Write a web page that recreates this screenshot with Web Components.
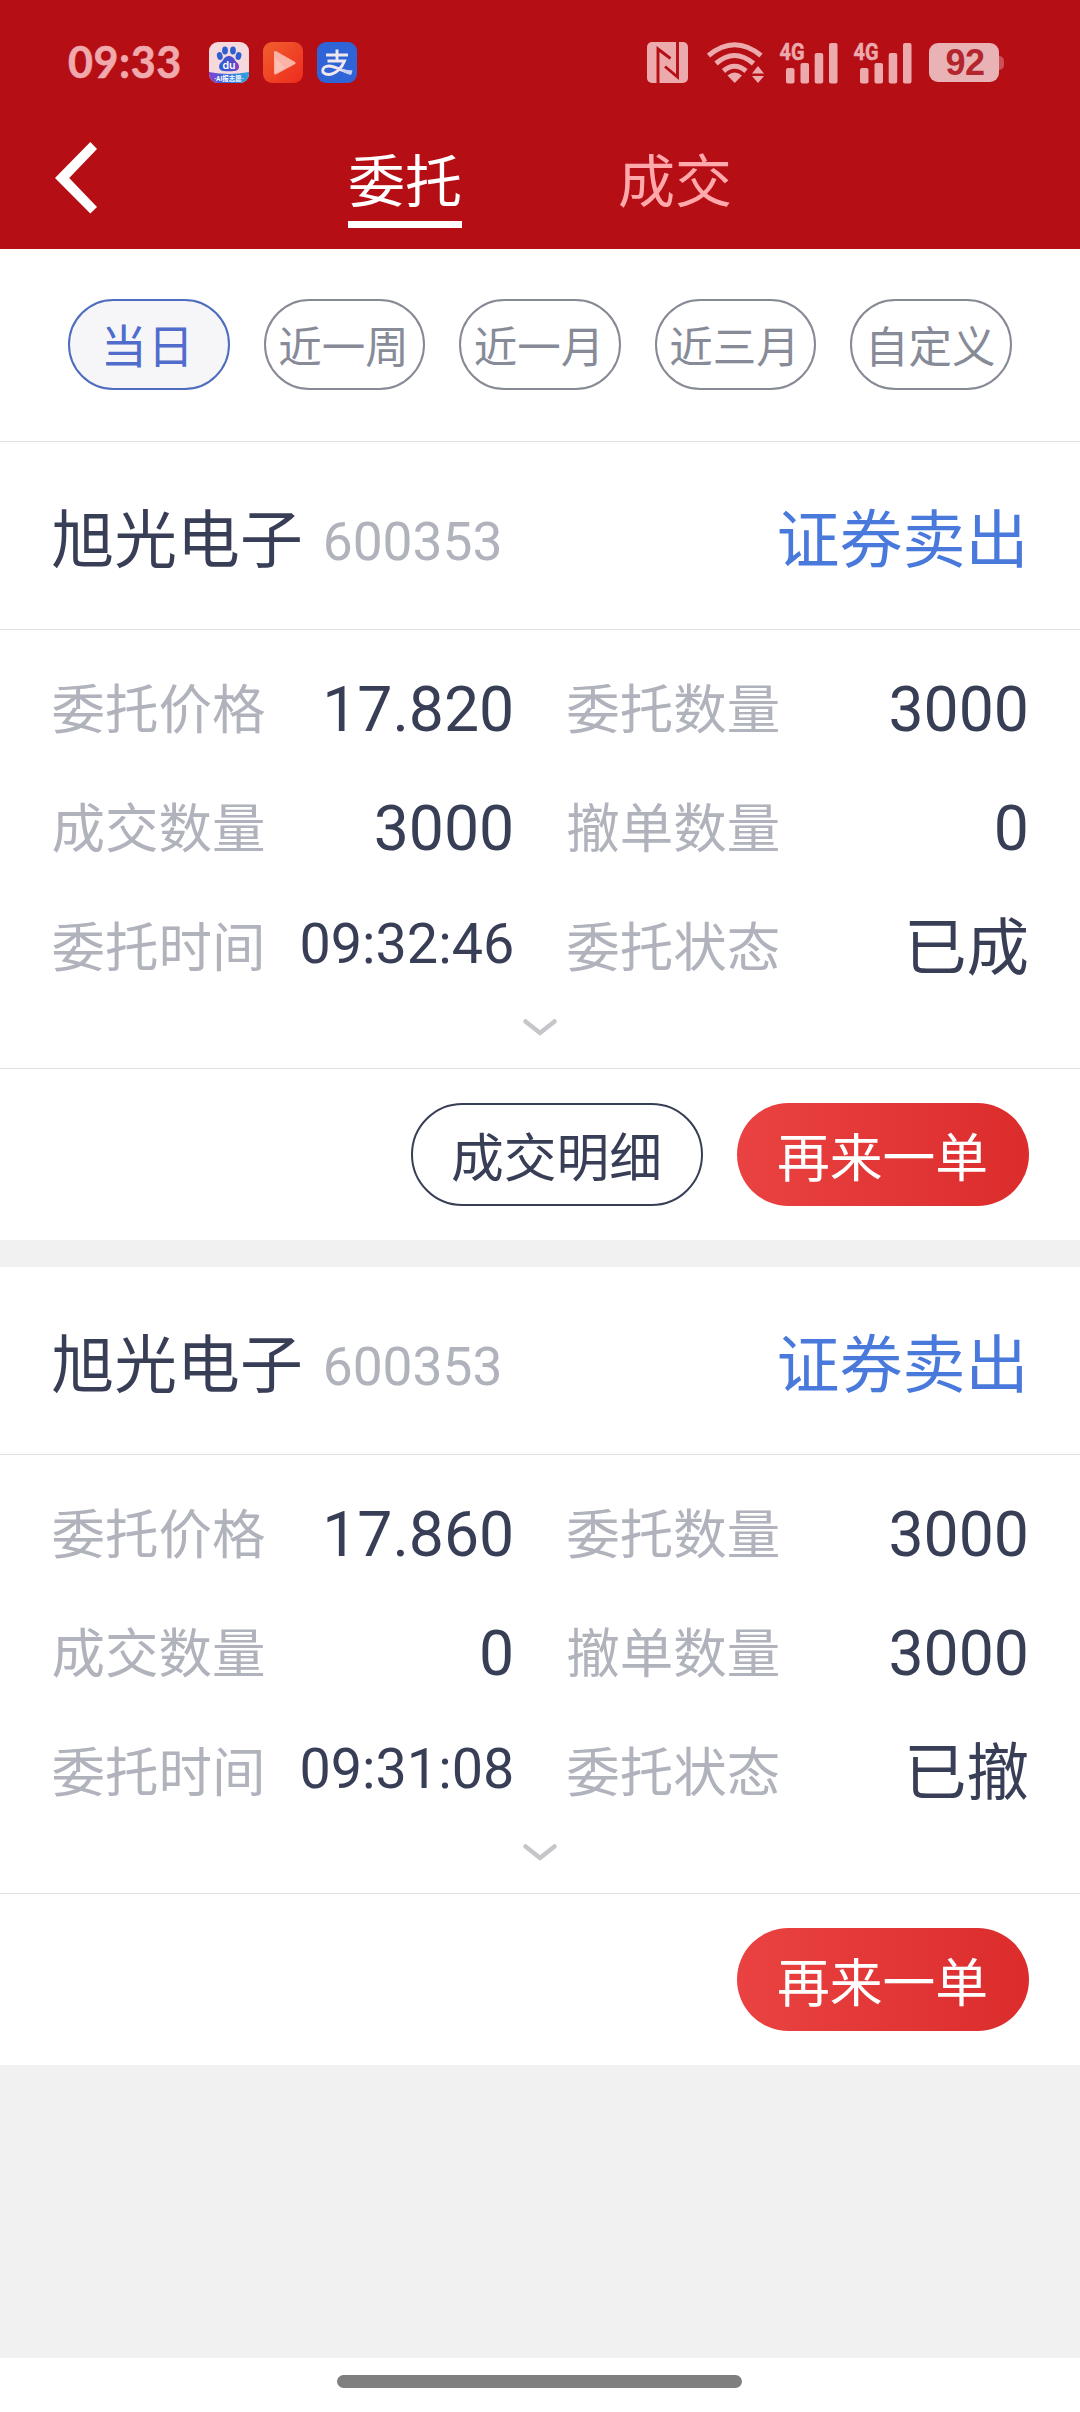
<!DOCTYPE html>
<html lang="zh-CN">
<head>
<meta charset="utf-8">
<title>委托</title>
<style>
html,body{margin:0;padding:0}
body{width:1080px;height:2412px;overflow:hidden;background:#fff;font-family:Roboto,"Noto Sans CJK SC",sans-serif}
</style>
</head>
<body>
<trade-app></trade-app>
<script>
function define(name, html, after) {
  const tpl = document.createElement('template');
  tpl.innerHTML = html;
  customElements.define(name, class extends HTMLElement {
    constructor() {
      super();
      this.attachShadow({mode: 'open'}).appendChild(tpl.content.cloneNode(true));
    }
    connectedCallback() { if (after) after(this, this.shadowRoot); }
  });
}

define('signal-icon', `
<style>:host{display:block;width:58px;height:42px}svg{display:block;overflow:visible}</style>
<svg width="58" height="42" viewBox="0 0 58 42" fill="#edaaad">
  <text x="-.5" y="17.500" font-family="Roboto" font-weight="700" font-size="24" textLength="25" lengthAdjust="spacingAndGlyphs" stroke="#edaaad" stroke-width=".5">4G</text>
  <rect x="6" y="26" width="8.5" height="15.5" rx="2"/><rect x="20.5" y="21" width="8.5" height="20.5" rx="2"/>
  <rect x="34.7" y="11" width="8.5" height="30.5" rx="2"/><rect x="49" y="1" width="8.5" height="40.5" rx="2"/>
</svg>`);

define('battery-icon', `
<style>
:host{display:flex;align-items:center;height:39px}
.body{width:70px;height:39px;border-radius:9px;background:#e9b2b5;display:flex;align-items:center;justify-content:center;color:#b3262e;font:700 36px/39px "Liberation Sans",sans-serif;letter-spacing:-.5px;text-indent:2px}
.nub{width:5px;height:14px;border-radius:0 5px 5px 0;background:#cb5057}
</style><div class="body"><slot></slot></div><div class="nub"></div>`);

define('status-bar', `
<style>
:host{display:flex;align-items:center;height:125px;padding:0 76px 0 68px;box-sizing:border-box}
.time{font:700 43px/50px Lato,sans-serif;color:#f0a9ad;width:141px;letter-spacing:.6px;padding-bottom:2px;-webkit-text-stroke:.6px #f0a9ad}
.apps{display:flex;gap:14px;flex:1}
.sys{display:flex;align-items:center}
svg{display:block}
.wifi{margin:0 16px 0 19px}
.s2{margin:0 17px 0 16px}
</style>
<div class="time">09:33</div>
<div class="apps">
  <svg width="40" height="41" viewBox="0 0 40 41">
    <defs><clipPath id="c"><rect width="40" height="41" rx="9"/></clipPath>
    <linearGradient id="g"><stop offset="0" stop-color="#8a3fd0"/><stop offset=".35" stop-color="#3f66dc"/><stop offset="1" stop-color="#28a6dc"/></linearGradient>
    <linearGradient id="p" x1="0" x2="1"><stop offset="0" stop-color="#2f5fd2"/><stop offset=".6" stop-color="#4750cf"/><stop offset="1" stop-color="#8b3fc4"/></linearGradient></defs>
    <g clip-path="url(#c)">
      <rect width="40" height="41" fill="#f6d9dd"/>
      <ellipse cx="10.8" cy="14" rx="2.8" ry="4" fill="#2d5fd0" transform="rotate(-15 10.8 14)"/>
      <ellipse cx="16" cy="8.5" rx="2.9" ry="4" fill="#2d5fd0"/><ellipse cx="24" cy="8.5" rx="2.9" ry="4" fill="#2d5fd0"/>
      <ellipse cx="29.5" cy="14" rx="2.8" ry="4" fill="#2d5fd0" transform="rotate(15 29.5 14)"/>
      <path d="M20 14C15 14 15 18 12 20.500C9 23 9.500 28.500 14 29C17 29.300 23 29.300 26 29C31 28.500 31 23 28 20.500C25 18 25 14 20 14Z" fill="url(#p)"/>
      <text x="20" y="26.500" text-anchor="middle" font-family="Inter" font-weight="600" font-size="10.500" fill="#fff">du</text>
      <path d="M0 30Q20 34 40 30V41H0Z" fill="url(#g)"/>
      <text x="20" y="38.500" text-anchor="middle" font-family="Roboto,Noto Sans CJK SC" font-weight="700" font-size="6.500" fill="#fff">·AI报志愿·</text>
    </g>
  </svg>
  <svg width="40" height="41" viewBox="0 0 40 41">
    <defs><linearGradient id="r" x1="0" y1="0" x2="1" y2="1"><stop offset="0" stop-color="#f0602d"/><stop offset="1" stop-color="#ee2a1e"/></linearGradient></defs>
    <rect width="40" height="41" rx="9" fill="url(#r)"/>
    <path d="M12.500 10.500V31L31 21Z" fill="#fbb3a6" stroke="#fbb3a6" stroke-width="3" stroke-linejoin="round"/>
    <path d="M12.500 16L22 26L12.500 31Z" fill="#fdcabf" opacity=".6"/>
  </svg>
  <svg width="40" height="41" viewBox="0 0 40 41">
    <rect width="40" height="41" rx="9" fill="#2f64d6"/>
    <g fill="none" stroke="#f1e7ef" stroke-linecap="butt"><path d="M9 13H31M20 7.500V19" stroke-width="2.900"/>
    <path d="M10.500 19H27.500C25 26 18 32.500 11.500 32.500C3.500 32.500 4 24 12 24C19 24 25 30 34.500 30.500" stroke-width="2.900"/></g>
    <path d="M22 25.500C27 28 31 28.300 35.500 28.300L34 33C29 32 25 29.500 22 25.500Z" fill="#c9cff0"/>
  </svg>
</div>
<div class="sys">
  <svg width="41" height="41" viewBox="0 0 41 41">
    <rect width="41" height="41" rx="5" fill="#edaaad"/>
    <path d="M11 41V7L23.500 16.500M30.500 0V35L18 24.500" fill="none" stroke="#b50f15" stroke-width="2.900"/>
  </svg>
  <svg class="wifi" width="57" height="42" viewBox="0 0 57 42">
    <g fill="none" stroke="#edaaad" stroke-width="5"><path d="M1.500 13.500Q27.500 -8 54 13.500"/><path d="M9 21.500Q27.500 5.500 46.500 21.500"/><path d="M16.500 29Q27.500 19.500 39 29"/></g>
    <path d="M20.500 33.500Q27.500 27.500 35 33.500L27.700 41Z" fill="#edaaad"/>
    <path d="M51 24L57 31.500H45ZM45 34H57L51 41Z" fill="#edaaad"/>
  </svg>
  <signal-icon></signal-icon><signal-icon class="s2"></signal-icon>
  <battery-icon>92</battery-icon>
</div>`);

define('nav-tab', `
<style>
:host{display:flex;flex-direction:column;align-items:center;width:270px;color:#ffa9ac;font-size:57px;line-height:76px}
.bar{width:114px;height:7px;margin-top:0}
:host([active]){color:#fff}
:host([active]) .bar{background:#fff}
</style><span><slot></slot></span><div class="bar"></div>`);

define('nav-bar', `
<style>
:host{display:flex;height:124px;align-items:flex-start}
.back{width:215px;padding:17px 0 0 55px}
.tabs{display:flex;padding-top:20px}
svg{display:block}
</style>
<div class="back"><svg width="42" height="72" viewBox="0 0 42 72"><path d="M35.300 0L42 7L14.200 36L42 65L35.300 71.500L0 36Z" fill="#fff"/></svg></div>
<div class="tabs"><nav-tab active>委托</nav-tab><nav-tab>成交</nav-tab></div>`);

define('range-pill', `
<style>
:host{display:flex;align-items:center;justify-content:center;height:91px;box-sizing:border-box;border:2px solid #868a94;border-radius:46px;color:#878b98;font-size:43.5px;white-space:nowrap;padding:0 2px 1px 0}
:host([active]){border-color:#4f6dbe;background:#f6f6f8;color:#506ccc;font-size:46px;letter-spacing:1px;padding:0 2px 3px 0}
</style><slot></slot>`);

define('range-filter', `
<style>:host{display:grid;grid-template-columns:repeat(5,minmax(0,1fr));column-gap:34px;padding:50px 68px 51px;border-bottom:1px solid #e1e1e3}</style>
<range-pill active>当日</range-pill><range-pill>近一周</range-pill><range-pill>近一月</range-pill><range-pill>近三月</range-pill><range-pill>自定义</range-pill>`);

define('order-field', `
<style>
:host{display:flex;justify-content:space-between;align-items:center;height:119px;white-space:nowrap}
.l{color:#b0b2bc;font-size:53.5px;line-height:80px}
.v{color:#383e55;font-size:62.5px;line-height:80px;padding-bottom:2px}
:host([status]) .v{padding-bottom:0}
:host([time]) .v{font-size:55.7px;padding-bottom:10px}
</style><span class="l"></span><span class="v"><slot></slot></span>`,
(el, root) => { root.querySelector('.l').textContent = el.getAttribute('label'); });

define('pill-button', `
<style>
:host{display:flex;align-items:center;justify-content:center;width:292px;height:103px;box-sizing:border-box;border-radius:52px;border:2px solid #383e55;color:#383e55;font-size:52.8px;padding:0 1px 2px 0}
:host([primary]){border:0;color:#fff;background:linear-gradient(90deg,#ea4242,#dc2c2c)}
</style><slot></slot>`);

define('order-card', `
<style>
:host{display:block;height:798px;background:#fff}
header{display:flex;align-items:center;height:187px;box-sizing:border-box;padding:0 51.5px 3px 51.5px}
.name{font-size:62.8px;color:#383e55}
.code{font-size:53.3px;color:#b0b2bc;margin:16px 0 0 20px;flex:1}
.side{font-size:63px;color:#4a79dc}
.grid{border-top:1px solid #e1e1e3;display:grid;grid-template-columns:1fr 1fr;column-gap:52px;padding:21px 51px 0 51.5px}
.more{display:flex;justify-content:center;height:60px}
.more svg{display:block;margin:10px 1px 0 0}
footer{display:flex;justify-content:flex-end;gap:34px;border-top:1px solid #e1e1e3;padding:34px 51px}
</style>
<header><span class="name"></span><span class="code"></span><span class="side"></span></header>
<div class="grid"><slot></slot></div>
<div class="more"><svg width="36" height="20" viewBox="0 0 36 20"><path d="M3.500 3.500L18 15L32.500 3.500" fill="none" stroke="#c5c5ca" stroke-width="4.500" stroke-linecap="round"/></svg></div>
<footer><slot name="action"></slot></footer>`,
(el, root) => { for (const k of ['name', 'code', 'side']) root.querySelector('.' + k).textContent = el.getAttribute(k); });

define('home-indicator', `
<style>:host{display:flex;justify-content:center;height:54px;box-sizing:border-box;padding:17px 1px 0 0;background:#fff}div{width:405px;height:13px;border-radius:7px;background:#7f7f7f}</style><div></div>`);

define('trade-app', `
<style>
:host{display:flex;flex-direction:column;width:1080px;height:2412px;background:#f1f1f1}
.top{background:#b50f15;height:249px}
range-filter{background:#fff}
.list{flex:1;display:flex;flex-direction:column;gap:27px}
</style>
<div class="top"><status-bar></status-bar><nav-bar></nav-bar></div>
<range-filter></range-filter>
<div class="list">
  <order-card name="旭光电子" code="600353" side="证券卖出">
    <order-field label="委托价格">17.820</order-field><order-field label="委托数量">3000</order-field>
    <order-field label="成交数量">3000</order-field><order-field label="撤单数量">0</order-field>
    <order-field label="委托时间" time>09:32:46</order-field><order-field label="委托状态" status>已成</order-field>
    <pill-button slot="action">成交明细</pill-button><pill-button slot="action" primary>再来一单</pill-button>
  </order-card>
  <order-card name="旭光电子" code="600353" side="证券卖出">
    <order-field label="委托价格">17.860</order-field><order-field label="委托数量">3000</order-field>
    <order-field label="成交数量">0</order-field><order-field label="撤单数量">3000</order-field>
    <order-field label="委托时间" time>09:31:08</order-field><order-field label="委托状态" status>已撤</order-field>
    <pill-button slot="action" primary>再来一单</pill-button>
  </order-card>
</div>
<home-indicator></home-indicator>`);
</script>
</body>
</html>
